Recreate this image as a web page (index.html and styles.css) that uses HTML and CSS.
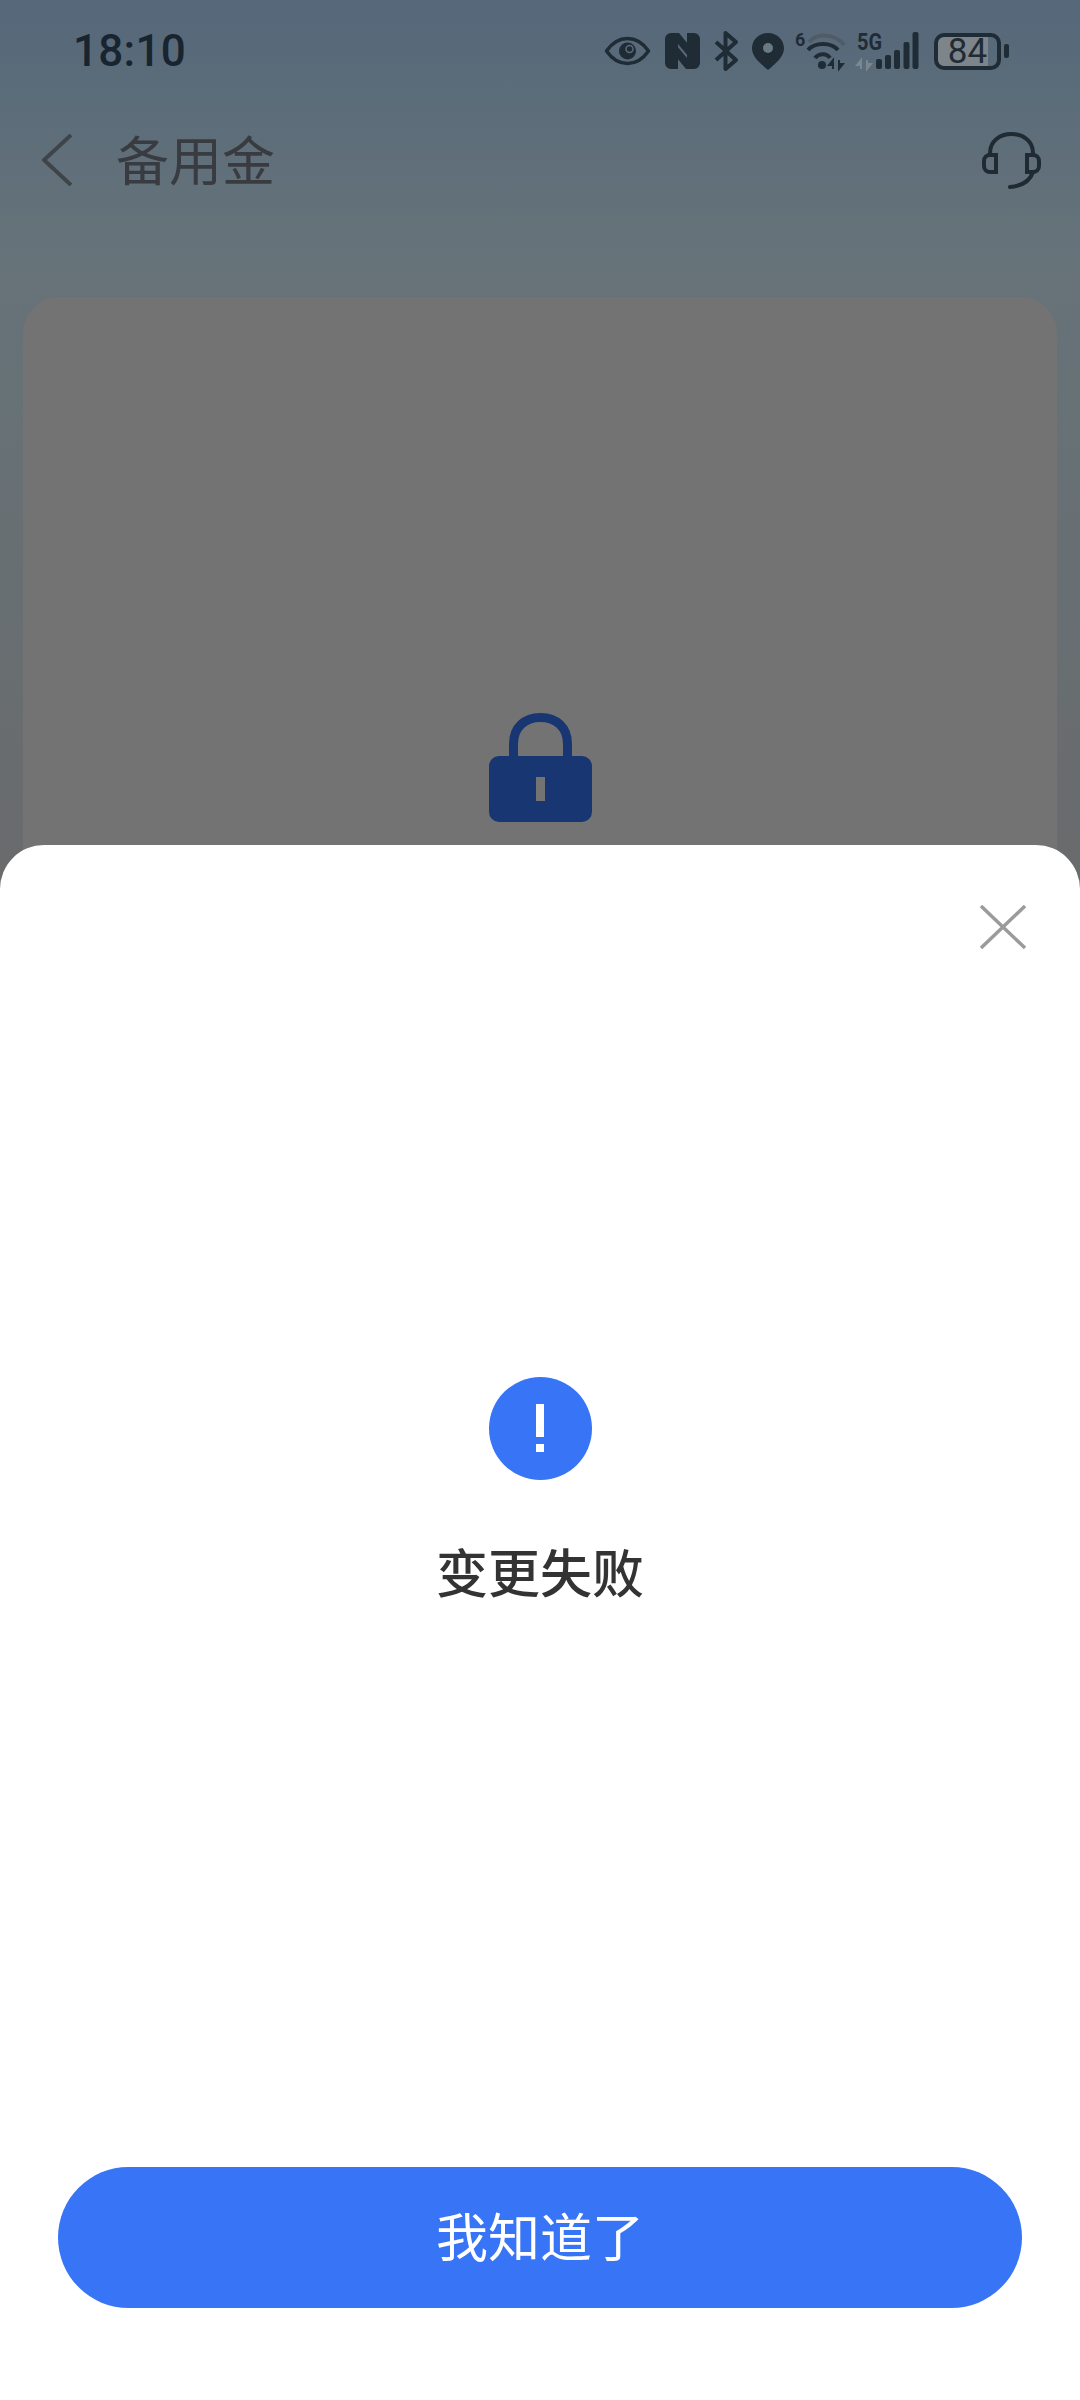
FILE: index.html
```html
<!DOCTYPE html>
<html lang="zh-CN">
  <head>
    <meta charset="UTF-8" />
    <title>备用金</title>
    <link rel="stylesheet" href="styles.css">
  </head>
  <body>
    <div class="page">
      <div class="status-bar">
        <span class="time">18:10</span>
        <div class="status-icons">
          <svg class="ic-eye" viewBox="0 0 45 42">
            <path d="M1.5 21C7 13 14 8.5 22.500 8.500S38 13 43.500 21C38 29 31 33.500 22.500 33.500S7 29 1.500 21Z" fill="none" stroke="#1f2c36" stroke-width="3.500" stroke-linejoin="round"/>
            <circle cx="22.500" cy="21" r="8.500" fill="#1f2c36"/>
            <circle cx="24.500" cy="19" r="3.500" fill="none" stroke="#5b6b77" stroke-width="1.500"/>
          </svg>
          <svg class="ic-nfc" viewBox="0 0 37 42">
            <path d="M7 3H15L24 14V26L14 14V39H7A6 6 0 0 1 1 33V9A6 6 0 0 1 7 3Z" fill="#1f2c36"/>
            <path d="M30 39H22L13 28V16L23 28V3H30A6 6 0 0 1 36 9V33A6 6 0 0 1 30 39Z" fill="#1f2c36"/>
          </svg>
          <svg class="ic-bt" viewBox="0 0 25 42">
            <path d="M2 12L22 30L11.500 39V3L22 12L2 30" fill="none" stroke="#1f2c36" stroke-width="4" stroke-linejoin="round"/>
          </svg>
          <svg class="ic-pin" viewBox="0 0 32 42">
            <path d="M16 3C7 3 0 9.500 0 18.500C0 27 9 34 16 40C23 34 32 27 32 18.500C32 9.500 25 3 16 3Z" fill="#1f2c36"/>
            <circle cx="16" cy="18" r="5" fill="#6a7a85"/>
          </svg>
          <svg class="ic-wifi" viewBox="0 0 52 42">
            <text x="0" y="16" class="tiny">6</text>
            <path d="M14 12C22 3 40 3 49 15" fill="none" stroke="#4f5c66" stroke-width="4"/>
            <path d="M13 20C20 12 36 12 43 20" fill="none" stroke="#1f2c36" stroke-width="4"/>
            <path d="M20 28C24 23 32 23 35 28" fill="none" stroke="#1f2c36" stroke-width="4"/>
            <circle cx="27" cy="35" r="4" fill="#1f2c36"/>
            <path d="M38 39V30L34 35H38M44 30V39L48 34H44" fill="#1f2c36" stroke="#1f2c36" stroke-width="2"/>
          </svg>
          <svg class="ic-signal" viewBox="0 0 62 42">
            <text x="0" y="20" class="tiny-wide" textLength="25" lengthAdjust="spacingAndGlyphs">5G</text>
            <path d="M4 39V30L0 35H4M10 30V39L14 34H10" fill="#7b868e" stroke="#7b868e" stroke-width="2"/>
            <rect x="19" y="29" width="6" height="10" rx="2" fill="#1f2c36"/>
            <rect x="28" y="25" width="6" height="14" rx="2" fill="#1f2c36"/>
            <rect x="37" y="20" width="6" height="19" rx="2" fill="#1f2c36"/>
            <rect x="46.500" y="12" width="6" height="27" rx="2" fill="#1f2c36"/>
            <rect x="55.500" y="2" width="6" height="37" rx="2" fill="#1f2c36"/>
          </svg>
          <div class="battery">
            <div class="battery-body">
              <span class="battery-num">84</span>
            </div>
            <div class="battery-tip"></div>
          </div>
        </div>
      </div>

      <div class="nav">
        <svg class="back" viewBox="0 0 30 52">
          <polyline points="29,1 2,26 29,51" fill="none" stroke="#3f4448" stroke-width="4"/>
        </svg>
        <h1 class="nav-title">备用金</h1>
        <svg class="headset" viewBox="0 0 59 57">
          <path d="M8 23V21C8 9 18 2 29.500 2S51 9 51 21V23" fill="none" stroke="#1f2a33" stroke-width="4"/>
          <path d="M14 23V40H8A6 6 0 0 1 2 34V29A6 6 0 0 1 8 23Z" fill="none" stroke="#1f2a33" stroke-width="4"/>
          <path d="M45 23V40H51A6 6 0 0 0 57 34V29A6 6 0 0 0 51 23Z" fill="none" stroke="#1f2a33" stroke-width="4"/>
          <path d="M51 40C48 49 40 54 28 55" fill="none" stroke="#1f2a33" stroke-width="4" stroke-linecap="round"/>
        </svg>
      </div>

      <div class="card">
        <svg class="lock" viewBox="0 0 103 109">
          <path d="M24.500 48V31C24.500 14 36 4.500 51.500 4.500S78.500 14 78.500 31V48" fill="none" stroke="#183672" stroke-width="9"/>
          <path d="M10 43H93A10 10 0 0 1 103 53V99A10 10 0 0 1 93 109H10A10 10 0 0 1 0 99V53A10 10 0 0 1 10 43ZM47 64V88H56V64Z" fill="#183672" fill-rule="evenodd"/>
        </svg>
      </div>

      <div class="sheet">
        <svg class="close" viewBox="0 0 46 44">
          <path d="M1 1L45 43M45 1L1 43" fill="none" stroke="#9b9b9b" stroke-width="3.500"/>
        </svg>
        <div class="alert-icon"><span class="bang"></span><span class="bang-dot"></span></div>
        <div class="alert-text">变更失败</div>
        <button class="ok-button">我知道了</button>
      </div>
    </div>
  </body>
</html>
```

FILE: styles.css
```css
* {
  box-sizing: border-box;
  margin: 0;
  padding: 0;
}
body {
  font-family: "Noto Sans CJK SC", "Noto Sans", sans-serif;
}
.page {
  position: relative;
  width: 1080px;
  height: 2400px;
  overflow: hidden;
  background: linear-gradient(180deg, #55687a 0, #667379 260px, #696b6d 850px);
}
/* status bar */
.status-bar {
  height: 102px;
  padding: 0 71px 0 73px;
  display: flex;
  justify-content: space-between;
  align-items: center;
}
.time {
  font-family: Roboto, sans-serif;
  font-size: 44px;
  font-weight: 500;
  letter-spacing: 0.300px;
  color: #18242f;
}
.status-icons {
  display: flex;
  align-items: center;
  height: 42px;
}
.status-icons svg {
  height: 42px;
  display: block;
  overflow: visible;
}
.ic-eye { width: 45px; margin-right: 14px; }
.ic-nfc { width: 37px; margin-right: 13px; }
.ic-bt { width: 25px; margin-right: 13px; }
.ic-pin { width: 32px; margin-right: 11px; }
.ic-wifi { width: 52px; margin-right: 10px; }
.ic-signal { width: 62px; margin-right: 15px; }
.tiny {
  font-family: "Roboto", sans-serif;
  font-size: 18px;
  font-weight: 700;
  fill: #1f2c36;
}
.tiny-wide {
  font-family: "Roboto", sans-serif;
  font-size: 24px;
  font-weight: 700;
  fill: #1f2c36;
}
.battery {
  display: flex;
  align-items: center;
}
.battery-body {
  width: 67px;
  height: 37px;
  border: 4px solid #1f2c36;
  border-radius: 10px;
  background: linear-gradient(90deg, #7d858a 84%, transparent 84%);
  display: flex;
  align-items: center;
  justify-content: center;
}
.battery-num {
  font-family: Roboto, sans-serif;
  font-size: 35px;
  line-height: 29px;
  color: #1f2c36;
}
.battery-tip {
  width: 5px;
  height: 14px;
  margin-left: 3px;
  border-radius: 2px;
  background: #1f2c36;
}
/* nav */
.nav {
  height: 116px;
  padding: 0 39px 0 42px;
  display: flex;
  align-items: center;
}
.back {
  width: 30px;
  height: 52px;
}
.nav-title {
  margin-left: 44px;
  padding-bottom: 5px;
  font-size: 53px;
  font-weight: 400;
  color: #383b3f;
}
.headset {
  width: 59px;
  height: 57px;
  margin-left: auto;
}
/* card behind the sheet */
.card {
  height: 700px;
  margin: 79px 23px 0;
  padding-top: 416px;
  border-radius: 36px;
  background: #737373;
  display: flex;
  justify-content: center;
  align-items: flex-start;
}
.lock {
  width: 103px;
  height: 109px;
}
/* bottom sheet */
.sheet {
  position: absolute;
  left: 0;
  right: 0;
  top: 845px;
  bottom: 0;
  background: #ffffff;
  border-radius: 44px 44px 0 0;
  display: flex;
  flex-direction: column;
  align-items: center;
}
.close {
  width: 46px;
  height: 44px;
  margin: 60px 54px 0 0;
  align-self: flex-end;
}
.alert-icon {
  width: 103px;
  height: 103px;
  margin-top: 428px;
  padding-top: 27px;
  border-radius: 50%;
  background: #3874f6;
  display: flex;
  flex-direction: column;
  align-items: center;
}
.bang {
  width: 8px;
  height: 33px;
  background: #ffffff;
}
.bang-dot {
  width: 8px;
  height: 8px;
  margin-top: 7px;
  background: #ffffff;
}
.alert-text {
  margin-top: 61px;
  font-size: 52px;
  font-weight: 500;
  line-height: 60px;
  color: #333333;
}
.ok-button {
  width: 964px;
  height: 141px;
  margin-top: auto;
  margin-bottom: 92px;
  padding-bottom: 6px;
  border: none;
  border-radius: 71px;
  background: #3874f6;
  color: #ffffff;
  font-family: inherit;
  font-size: 52px;
  font-weight: 400;
}
```
